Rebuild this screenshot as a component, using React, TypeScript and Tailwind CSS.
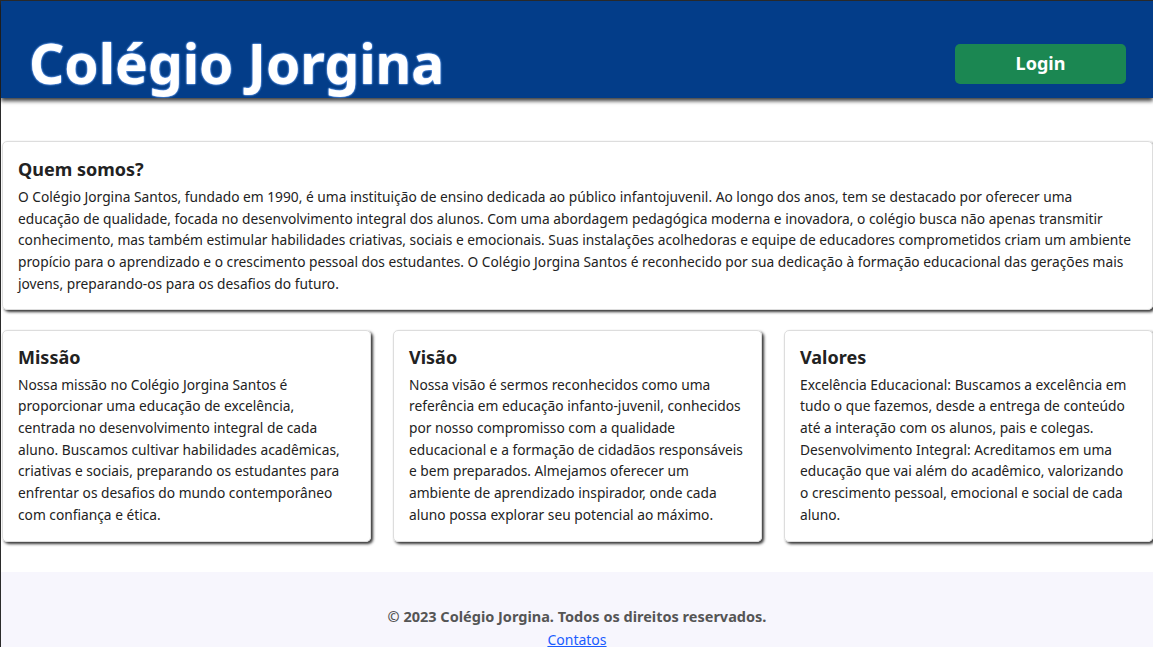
import React from "react";

const cards = [
  {
    title: "Missão",
    text: "Nossa missão no Colégio Jorgina Santos é proporcionar uma educação de excelência,\ncentrada no desenvolvimento integral de cada aluno. Buscamos cultivar habilidades acadêmicas, criativas e sociais, preparando os estudantes para enfrentar os desafios do mundo contemporâneo com confiança e ética.",
  },
  {
    title: "Visão",
    text: "Nossa visão é sermos reconhecidos como uma referência em educação infanto-juvenil, conhecidos por nosso compromisso com a qualidade\neducacional e a formação de cidadãos responsáveis e bem preparados. Almejamos oferecer um ambiente de aprendizado inspirador, onde cada aluno possa explorar seu potencial ao máximo.",
  },
  {
    title: "Valores",
    text: "Excelência Educacional: Buscamos a excelência em tudo o que fazemos, desde a entrega de conteúdo até a interação com os alunos, pais e colegas. Desenvolvimento Integral: Acreditamos em uma educação que vai além do acadêmico, valorizando\no crescimento pessoal, emocional e social de cada aluno.",
  },
];

const App = () => {
  return (
    <div className="min-h-screen bg-white border-t border-l border-[#2b2b2b] font-['Noto_Sans',sans-serif] text-[#222]">
      <header className="h-[97px] bg-[#033d89] flex items-center justify-between pl-[28px] pr-[27px] shadow-[0_3px_4px_rgba(0,0,0,0.75)]">
        <h1 className="text-[55px] leading-none font-bold text-white pt-[26px] [text-shadow:0_0_2px_#7fb2ff,0_0_2px_#7fb2ff]">
          Colégio Jorgina
        </h1>
        <button className="w-[171px] h-[40px] mt-[28px] rounded-[5px] bg-[#1b8752] text-white text-[18px] font-bold">
          Login
        </button>
      </header>

      <main className="pt-[43px] pb-[30px] pl-[1px]">
        <section className="border border-[#ddd] rounded-[5px] px-[15px] pt-[14px] pb-[14px] shadow-[2px_2px_3px_rgba(0,0,0,0.8)]">
          <h2 className="text-[18px] font-bold mb-[3px]">Quem somos?</h2>
          <p className="text-[13.75px] leading-[21.7px]">
            O Colégio Jorgina Santos, fundado em 1990, é uma instituição de ensino dedicada ao público infantojuvenil. Ao
            longo dos anos, tem se destacado por oferecer uma educação de qualidade, focada no desenvolvimento integral dos
            alunos. Com uma abordagem pedagógica moderna e inovadora, o colégio busca não apenas transmitir conhecimento,
            mas também estimular habilidades criativas, sociais e emocionais. Suas instalações acolhedoras e equipe de
            educadores comprometidos criam um ambiente propício para o aprendizado e o crescimento pessoal dos estudantes.
            O Colégio Jorgina Santos é reconhecido por sua dedicação à formação educacional das gerações mais jovens,
            preparando-os para os desafios do futuro.
          </p>
        </section>

        <div className="grid grid-cols-3 gap-[22px] mt-[20px]">
          {cards.map((c) => (
            <section
              key={c.title}
              className="border border-[#ddd] rounded-[5px] pl-[15px] pr-[14px] pt-[13px] pb-[16px] shadow-[2px_2px_3px_rgba(0,0,0,0.8)]"
            >
              <h2 className="text-[18px] font-bold mb-[3px]">{c.title}</h2>
              <p className="text-[13.75px] leading-[21.7px] whitespace-pre-line">{c.text}</p>
            </section>
          ))}
        </div>
      </main>

      <footer className="bg-[#f7f6fd] pt-[33px] pb-[4px] text-center">
        <p className="text-[14.5px] leading-[22px] font-bold text-[#555]">
          © 2023 Colégio Jorgina. Todos os direitos reservados.
        </p>
        <a href="#" className="text-[14px] text-[#1a5cff] underline">
          Contatos
        </a>
      </footer>
    </div>
  );
};

export default App;
